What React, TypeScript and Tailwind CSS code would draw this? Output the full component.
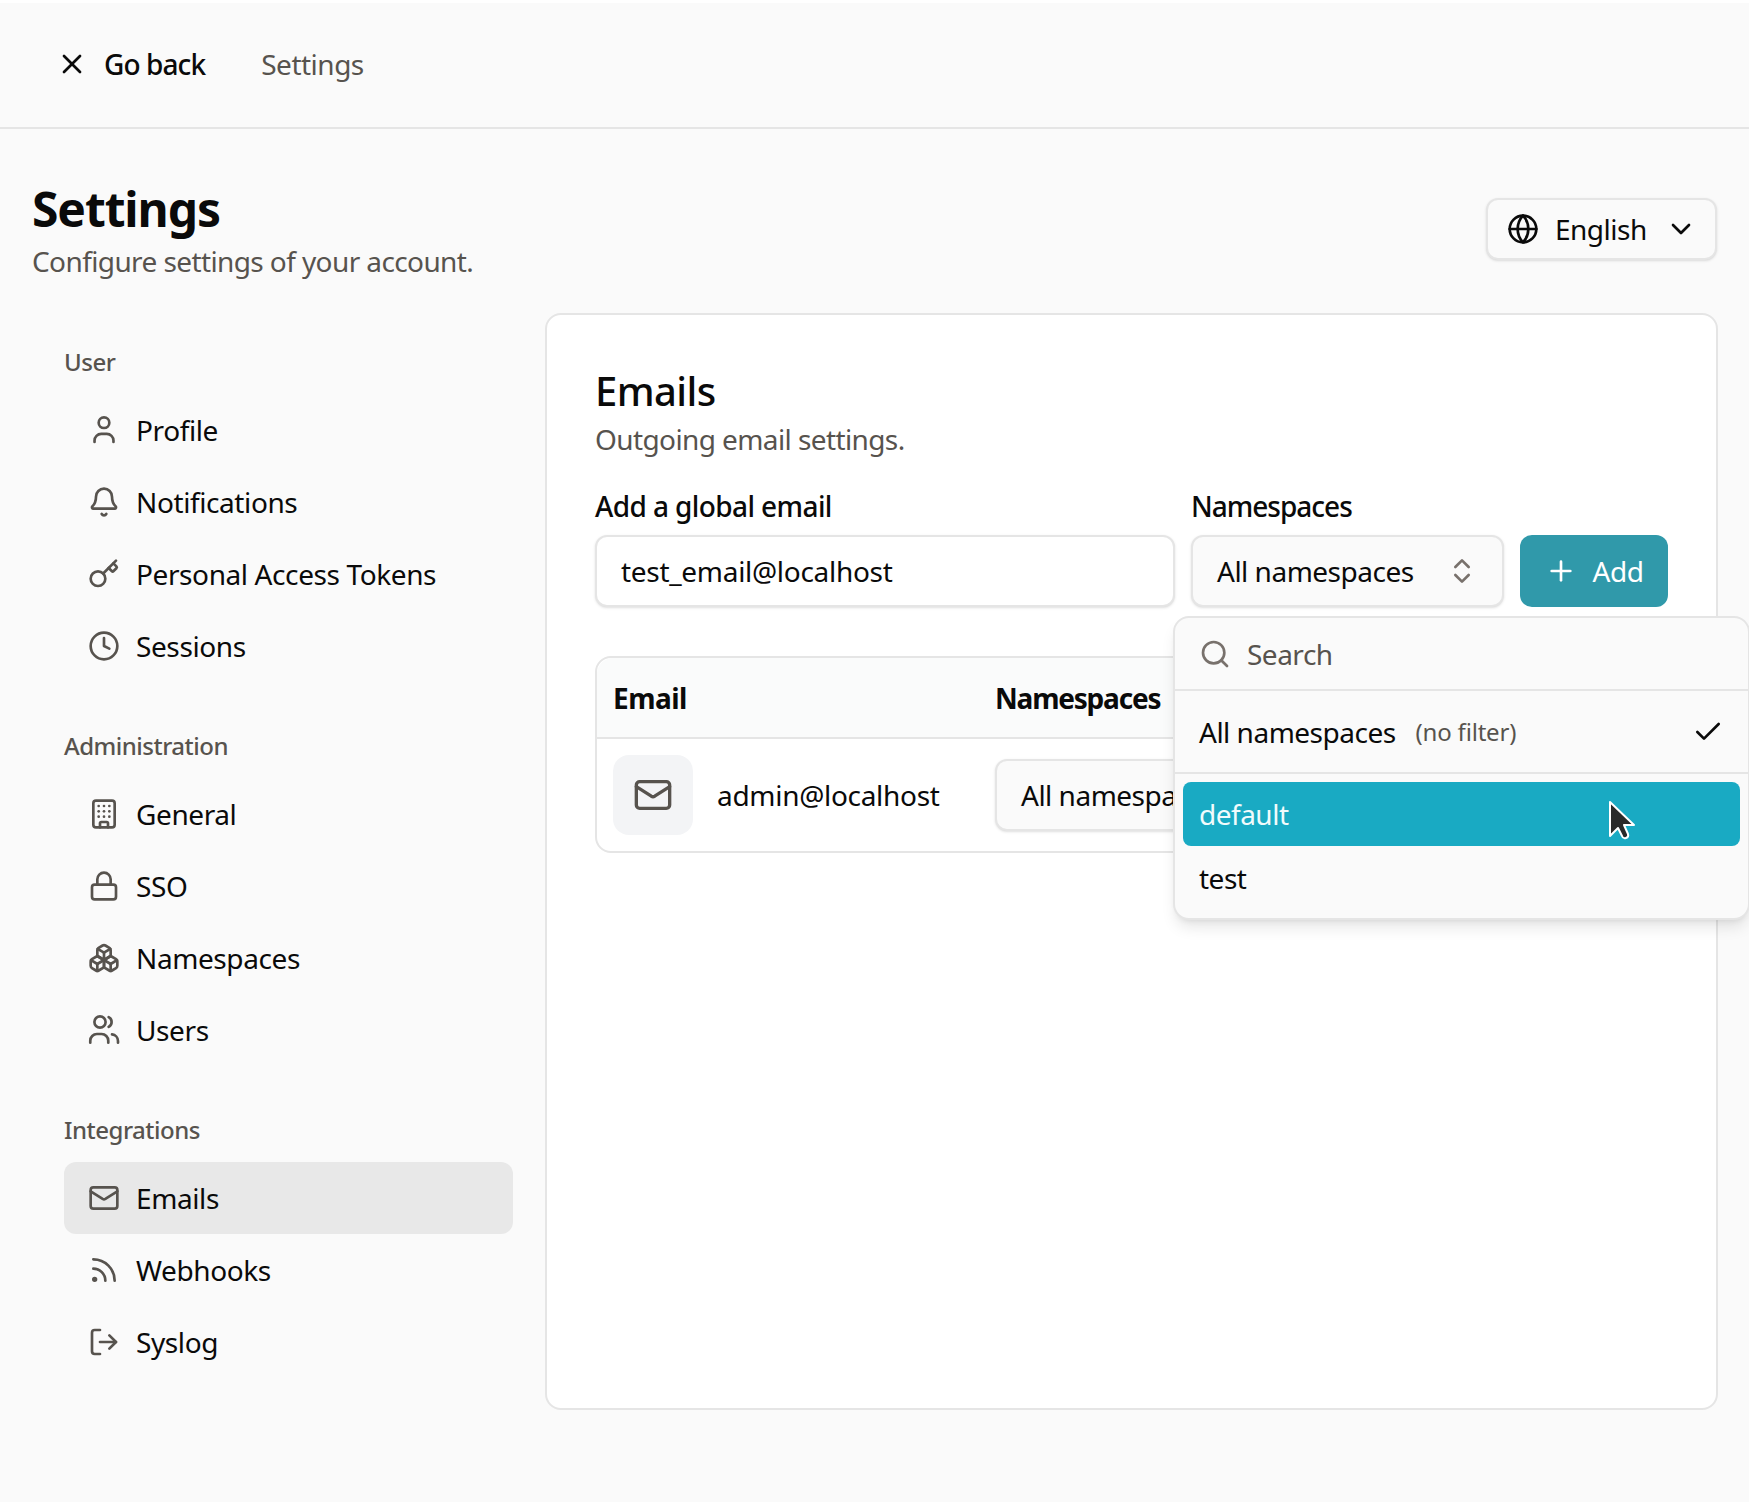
import {
  Bell,
  Boxes,
  Building,
  Check,
  ChevronDown,
  ChevronsUpDown,
  Clock,
  Globe,
  Key,
  Lock,
  LogOut,
  Mail,
  Plus,
  Rss,
  Search,
  X,
} from 'lucide-react';

function ProfileIcon({ size, className }: { size: number; className?: string }) {
  return (
    <svg width={size} height={size} viewBox="0 0 24 24" fill="none" stroke="currentColor" strokeWidth="2" strokeLinecap="round" className={className}>
      <circle cx="12" cy="6.5" r="4" />
      <path d="M4.9 21v-1.1a5 5 0 0 1 5-5h4.2a5 5 0 0 1 5 5V21" />
    </svg>
  );
}

function TeamIcon({ size, className }: { size: number; className?: string }) {
  return (
    <svg width={size} height={size} viewBox="0 0 24 24" fill="none" stroke="currentColor" strokeWidth="2" strokeLinecap="round" className={className}>
      <circle cx="9" cy="6" r="4.2" />
      <path d="M15.5 2.3a4.2 4.2 0 0 1 0 7.4" />
      <path d="M1.7 21.5V20a5 5 0 0 1 5-5h3.5a5 5 0 0 1 5 5v1.5" />
      <path d="M18 15.3a5 5 0 0 1 4.5 5v1.2" />
    </svg>
  );
}

const navGroups = [
  {
    label: 'User',
    items: [
      { name: 'Profile', icon: ProfileIcon },
      { name: 'Notifications', icon: Bell },
      { name: 'Personal Access Tokens', icon: Key },
      { name: 'Sessions', icon: Clock },
    ],
  },
  {
    label: 'Administration',
    items: [
      { name: 'General', icon: Building },
      { name: 'SSO', icon: Lock },
      { name: 'Namespaces', icon: Boxes },
      { name: 'Users', icon: TeamIcon },
    ],
  },
  {
    label: 'Integrations',
    items: [
      { name: 'Emails', icon: Mail },
      { name: 'Webhooks', icon: Rss },
      { name: 'Syslog', icon: LogOut },
    ],
  },
];

function NamespaceDropdown() {
  return (
    <div className="absolute left-[-18px] top-[81px] z-10 w-[577px] rounded-2xl border-2 border-[#e5e5e5] bg-[#fafafa] shadow-lg">
      <div className="flex h-[73px] items-center gap-4 border-b-2 border-[#e5e5e5] pl-6 text-[#57534e]">
        <Search size={32} className="text-[#78716c]" />
        <span>Search</span>
      </div>
      <div className="flex h-[83px] items-center border-b-2 border-[#e5e5e5] pl-6 pr-6">
        <span>All namespaces</span>
        <span className="ml-5 text-[24px] tracking-[-0.2px] text-[#57534e]">(no filter)</span>
        <Check size={32} className="ml-auto" />
      </div>
      <div className="p-2">
        <div className="relative flex h-16 items-center rounded-lg bg-[#19aac3] pl-4 text-[#f0fbfc]">
          default
          <svg className="absolute left-[425px] top-[18px]" width="30" height="44" viewBox="0 0 30 44">
            <path
              d="M2 2 L2 36 L10 28 L14 36 Q15 39 18 38 Q21 37 20 34 L16 25 L26 25 Z"
              fill="#2a2a2a"
              stroke="#ffffff"
              strokeWidth="2"
              strokeLinejoin="round"
            />
          </svg>
        </div>
        <div className="flex h-16 items-center pl-4">test</div>
      </div>
    </div>
  );
}

export default function App() {
  return (
    <div className="h-[1502px] w-full overflow-hidden bg-white pt-[3px] text-[28px] leading-10 tracking-[-0.5px] text-[#0a0a0a] [font-family:'Noto_Sans',sans-serif]">
      <div className="h-full bg-[#fafafa]">
        <header className="flex h-[126px] items-center border-b-2 border-[#e5e5e5] pb-[3px] pl-14">
          <X size={32} />
          <span className="ml-4 font-medium tracking-[-0.9px]">Go back</span>
          <span className="ml-14 text-[#57534e]">Settings</span>
        </header>

        <div className="flex items-center justify-between pl-8 pr-8 pt-12 pb-8">
          <div>
            <h1 className="text-[48px] leading-[64px] font-bold tracking-[-1.1px]">Settings</h1>
            <p className="tracking-[-0.6px] text-[#57534e]">Configure settings of your account.</p>
          </div>
          <button className="flex h-[62px] w-[231px] items-center rounded-xl border-2 border-[#e5e5e5] bg-[#fafafa] pl-[19px] shadow-sm">
            <Globe size={32} />
            <span className="ml-4">English</span>
            <ChevronDown size={32} className="ml-auto mr-[18px]" />
          </button>
        </div>

        <div className="flex pl-8 pr-[31px]">
          <nav className="flex w-[513px] shrink-0 flex-col gap-12 px-8 pt-[33px]">
            {navGroups.map((group) => (
              <div key={group.label}>
                <p className="mb-4 text-[24px] leading-8 font-medium text-[#57534e]">{group.label}</p>
                {group.items.map((item) => (
                  <div
                    key={item.name}
                    className={`flex h-[72px] items-center gap-4 rounded-xl pl-6 tracking-[-0.4px] ${
                      item.name === 'Emails' ? 'bg-[#e8e8e8]' : ''
                    }`}
                  >
                    <item.icon size={32} className="text-[#57534e]" />
                    <span>{item.name}</span>
                  </div>
                ))}
              </div>
            ))}
          </nav>

          <main className="h-[1097px] flex-1 rounded-2xl border-2 border-[#e5e5e5] bg-white p-12">
            <h2 className="text-[40px] leading-14 font-medium tracking-[-0.6px]">Emails</h2>
            <p className="tracking-[-0.6px] text-[#57534e]">Outgoing email settings.</p>

            <div className="mt-[27px] flex items-end gap-4">
              <div className="flex-1">
                <p className="mb-[9px] font-medium tracking-[-0.6px]">Add a global email</p>
                <div className="flex h-[72px] items-center rounded-xl border-2 border-[#e5e5e5] bg-white pl-6 tracking-[-0.3px] shadow-sm">
                  test_email@localhost
                </div>
              </div>
              <div className="relative w-[313px]">
                <p className="mb-[9px] font-medium tracking-[-1px]">Namespaces</p>
                <div className="relative">
                  <div className="flex h-[72px] items-center justify-between rounded-xl border-2 border-[#e5e5e5] bg-[#fafafa] pl-6 pr-6 shadow-sm">
                    All namespaces
                    <ChevronsUpDown size={32} className="text-[#78716c]" />
                  </div>
                  <NamespaceDropdown />
                </div>
              </div>
              <button className="flex h-[72px] w-[148px] items-center justify-center gap-4 rounded-xl bg-[#3099aa] text-white">
                <Plus size={32} />
                Add
              </button>
            </div>

            <div className="mt-[49px] rounded-2xl border-2 border-[#e5e5e5]">
              <div className="flex h-[81px] items-center rounded-t-2xl border-b-2 border-[#e5e5e5] bg-[#fafbfb] pl-4 font-bold">
                <span className="w-[382px]">Email</span>
                <span className="tracking-[-1.2px]">Namespaces</span>
              </div>
              <div className="flex items-center p-4">
                <div className="flex h-20 w-20 items-center justify-center rounded-2xl bg-[#f3f4f6]">
                  <Mail size={40} className="text-[#57534e]" />
                </div>
                <span className="ml-6 w-[278px] tracking-[-0.3px]">admin@localhost</span>
                <div className="flex h-[72px] w-[313px] items-center rounded-xl border-2 border-[#e5e5e5] bg-[#fafafa] pl-6 shadow-sm">
                  All namespaces
                </div>
              </div>
            </div>
          </main>
        </div>
      </div>
    </div>
  );
}
